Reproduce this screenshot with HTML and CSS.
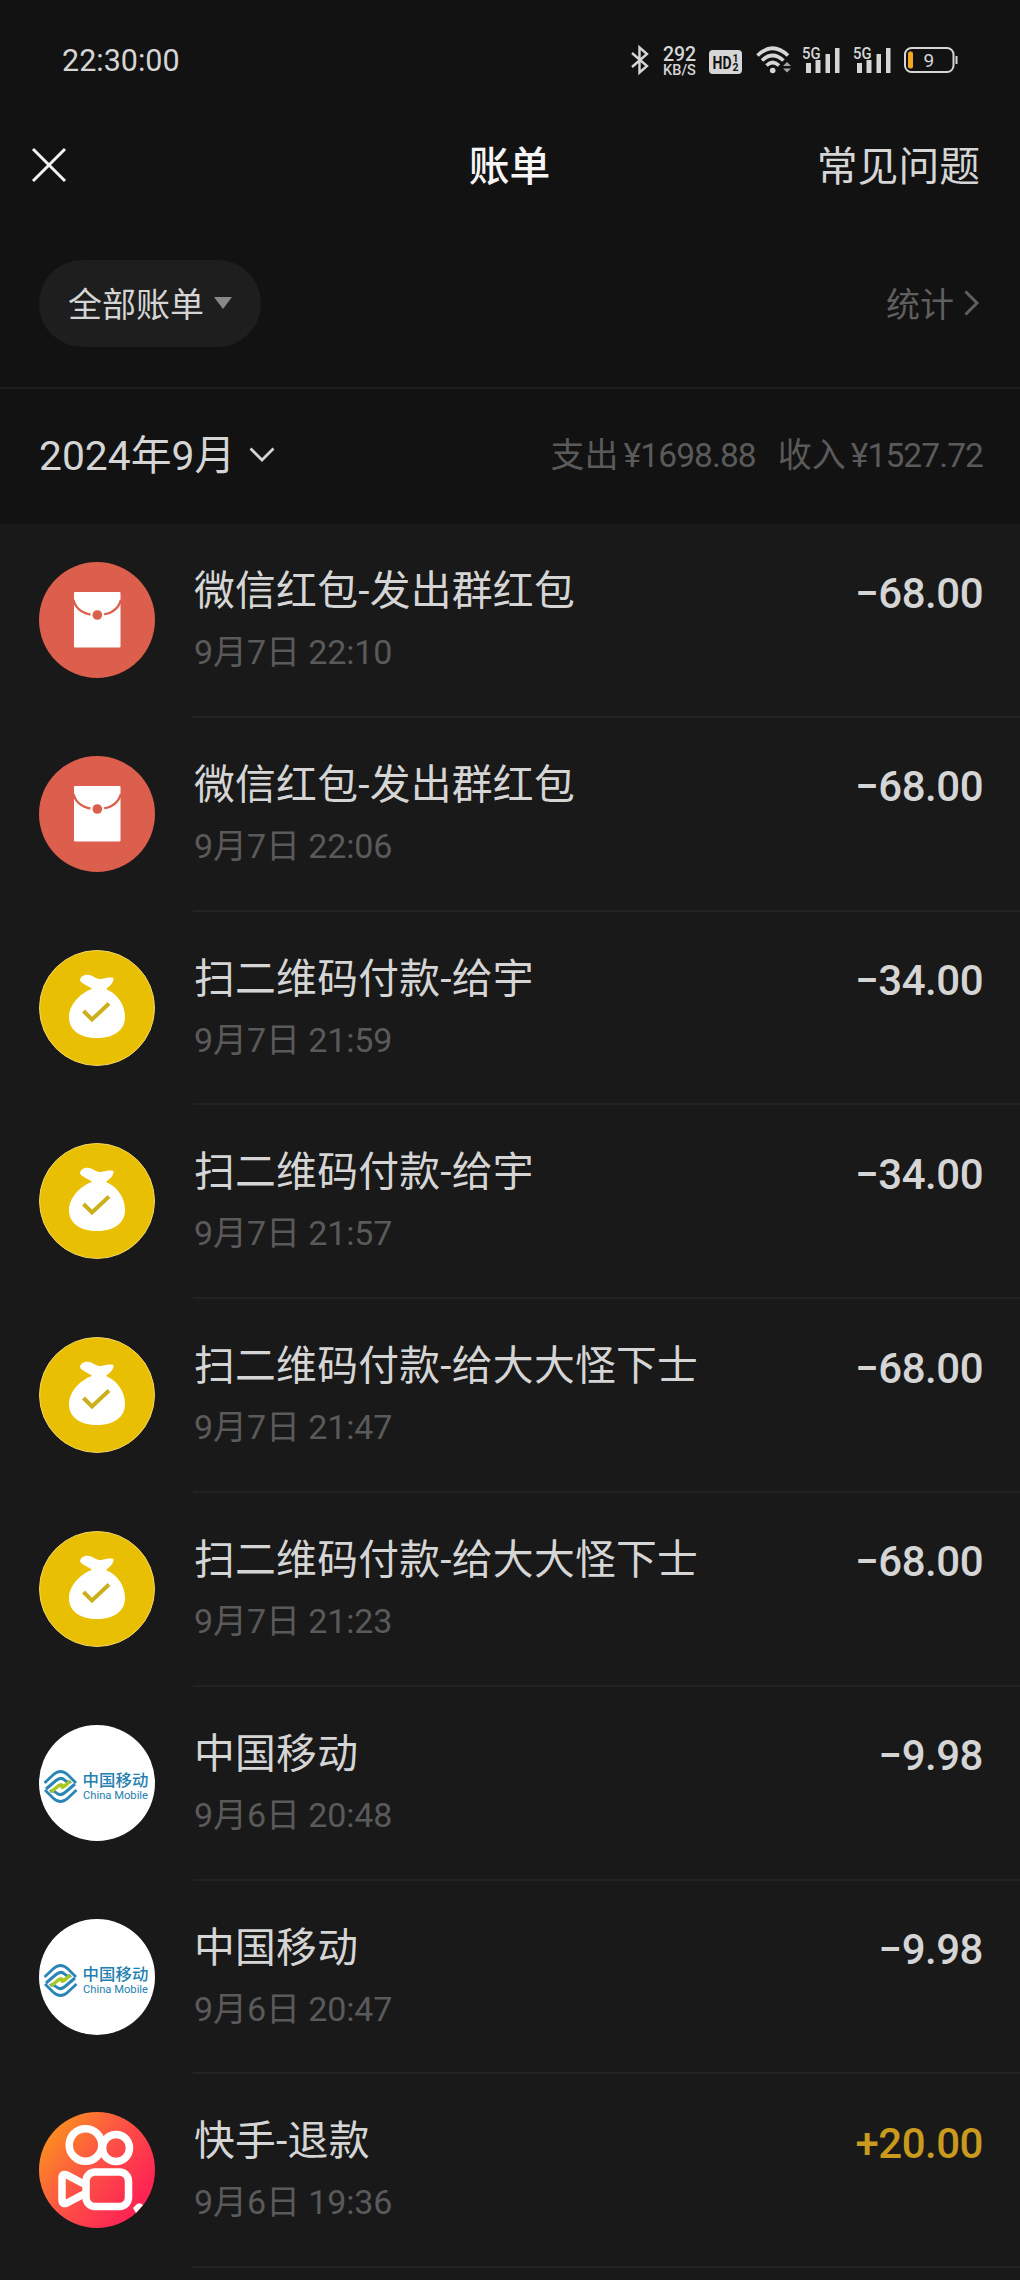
FILE: index.html
```
<!DOCTYPE html>
<html lang="zh-CN">
<head>
    <meta charset="UTF-8">
    <meta name="viewport" content="width=device-width, initial-scale=1.0">
    <title>账单</title>
    <link rel="stylesheet" href="styles.css">
</head>
<body>
    <!-- 图标 -->
    <svg class="sprite" width="0" height="0">
        <symbol id="packet" viewBox="0 0 116 116">
            <circle cx="58" cy="58" r="58" fill="#dc5e4c"/>
            <rect x="35" y="30" width="46.5" height="55.5" rx="1" fill="#fff"/>
            <path d="M34.5 38C37 48 46 53 58 53S79 48 82 38" fill="none" stroke="#dc5e4c" stroke-width="2.4"/>
            <circle cx="58.3" cy="53" r="7" fill="#fff"/>
            <circle cx="58.3" cy="53" r="4.8" fill="#dc5e4c"/>
        </symbol>
        <symbol id="bag" viewBox="0 0 116 116">
            <circle cx="58" cy="58" r="57.5" fill="#e9bf03" stroke="#f0d565"/>
            <path d="M53 39C51 36 42 34 41 30C42 25 48 24 52 25.5C56 27 57 29 62 29C67 28 71 27 74.5 28C75 32 71 36 67 39C79 44 86 55 86 67C86 81 74 88 58 88C42 88 30 81 30 67C30 55 41 43 53 39Z" fill="#fff"/>
            <path d="M44.5 61L53 69.5L70 53.5" fill="none" stroke="#cbb01c" stroke-width="4"/>
        </symbol>
        <symbol id="mobile" viewBox="0 0 116 116">
            <circle cx="58" cy="58" r="58" fill="#fff"/>
            <g id="wave" fill="none" stroke="#2a86b5">
                <path d="M5.5 58L14 50Q21.5 43 29 50L37 58" stroke-width="2.8"/>
                <path d="M7 64L17 55.500Q22 51.500 25.500 55T32 56.500" stroke-width="3"/>
            </g>
            <use href="#wave" transform="rotate(180 21.5 61.5)"/>
            <path d="M12 67L20 60.500Q23.500 58.500 23 61.500T31 56" fill="none" stroke="#a9c81f" stroke-width="3.4"/>
            <text x="43.5" y="61" font-size="16.4" textLength="66" class="logo-cn">中国移动</text>
            <text x="44" y="74" font-size="11.4" textLength="65" lengthAdjust="spacingAndGlyphs" class="logo-en">China Mobile</text>
        </symbol>
        <symbol id="kuaishou" viewBox="0 0 116 116">
            <linearGradient id="ks" x1="0.05" y1="0.2" x2="0.85" y2="0.8">
                <stop offset="0" stop-color="#fb8f20"/>
                <stop offset="0.5" stop-color="#fd5146"/>
                <stop offset="1" stop-color="#fe2453"/>
            </linearGradient>
            <circle cx="58" cy="58" r="58" fill="url(#ks)"/>
            <g fill="none" stroke="#fff" stroke-width="7.5">
                <circle cx="46.5" cy="33" r="16.3"/>
                <circle cx="77" cy="36" r="13.5"/>
                <rect x="47" y="60" width="42.5" height="34.5" rx="9"/>
                <path d="M45 72L28 63Q23 61 23 66V88Q23 93 28 91L45 82" stroke-linejoin="round"/>
            </g>
            <path d="M94 96L98 92Q101 90 104 93L97 101Z" fill="#fff"/>
        </symbol>
    </svg>

    <!-- 状态栏 -->
    <div class="status-bar">
        <span class="time">22:30:00</span>
        <div class="status-icons">
            <svg class="bluetooth" width="18" height="28" viewBox="0 0 18 28"><path d="M1 7L16 20L8.5 26.5V1.5L16 8L1 21" fill="none" stroke="#d6d6d6" stroke-width="2.4"/></svg>
            <div class="speed"><b>292</b><span>KB/S</span></div>
            <svg class="hd" width="33" height="24" viewBox="0 0 33 24">
                <rect width="33" height="24" rx="4" fill="#d6d6d6"/>
                <text x="3.5" y="18.5" font-size="18.5" textLength="19" lengthAdjust="spacingAndGlyphs">HD</text>
                <text x="23.5" y="11.5" font-size="10.5">1</text>
                <text x="23.5" y="20.5" font-size="10.5">2</text>
            </svg>
            <svg class="wifi" width="36" height="28" viewBox="0 0 36 28">
                <g fill="none" stroke="#d6d6d6" stroke-width="3.6">
                    <path d="M1.5 9.5Q16.5 -5 32 9.5"/>
                    <path d="M6 14.5Q16.5 4.5 27.5 14.5"/>
                    <path d="M10.5 19.5Q16.5 13.5 23 19.5"/>
                </g>
                <circle cx="16.7" cy="24.5" r="2.8" fill="#d6d6d6"/>
                <path d="M27 20L31 16L35 20ZM27 22.5L31 26.5L35 22.5Z" fill="#a5a5a5"/>
            </svg>
            <svg class="signal" width="38" height="28" viewBox="0 0 38 28">
                <text x="0" y="12.5" font-size="17" textLength="18.5" lengthAdjust="spacingAndGlyphs">5G</text>
                <path d="M4 17H9V27H4ZM13.5 14H18.5V27H13.5ZM23.5 8H28V27H23.5ZM33 2H37.5V27H33Z"/>
            </svg>
            <svg class="signal" width="38" height="28" viewBox="0 0 38 28">
                <text x="0" y="12.5" font-size="17" textLength="18.5" lengthAdjust="spacingAndGlyphs">5G</text>
                <path d="M4 17H9V27H4ZM13.5 14H18.5V27H13.5ZM23.5 8H28V27H23.5ZM33 2H37.5V27H33Z"/>
            </svg>
            <svg class="battery" width="54" height="26" viewBox="0 0 54 26">
                <rect x="1" y="1" width="48.5" height="24" rx="6.5" fill="none" stroke="#d6d6d6" stroke-width="2"/>
                <rect x="4" y="4.5" width="5" height="17" rx="2" fill="#f5a623"/>
                <path d="M52.5 9V17" stroke="#d6d6d6" stroke-width="2"/>
                <text x="19.5" y="19.5" font-size="19">9</text>
            </svg>
        </div>
    </div>

    <!-- 标题栏 -->
    <div class="header">
        <svg class="close" width="34" height="34" viewBox="0 0 34 34"><path d="M1 1L33 33M33 1L1 33" stroke="#f2f2f2" stroke-width="3" fill="none"/></svg>
        <h1>账单</h1>
        <a class="faq">常见问题</a>
    </div>

    <div class="filter">
        <button class="filter-button">全部账单<span class="caret"></span></button>
        <a class="stats">统计<svg width="15" height="26" viewBox="0 0 15 26"><path d="M1.5 1.5L13 13L1.5 24.5" fill="none" stroke="#5f5f5f" stroke-width="3"/></svg></a>
    </div>

    <div class="month">
        <div class="month-name">2024年9月<svg width="26" height="16" viewBox="0 0 26 16"><path d="M1.5 1.5L13 13L24.5 1.5" fill="none" stroke="#d5d5d5" stroke-width="2.8"/></svg></div>
        <div class="totals"><span>支出<i>¥1698.88</i></span><span>收入<i>¥1527.72</i></span></div>
    </div>

    <!-- 账单列表 -->
    <div class="bill-list">
        <div class="bill">
            <svg class="avatar"><use href="#packet"/></svg>
            <div class="bill-body">
                <div class="bill-info"><p class="name">微信红包-发出群红包</p><p class="date">9月7日 22:10</p></div>
                <span class="amount">−68.00</span>
            </div>
        </div>
        <div class="bill">
            <svg class="avatar"><use href="#packet"/></svg>
            <div class="bill-body">
                <div class="bill-info"><p class="name">微信红包-发出群红包</p><p class="date">9月7日 22:06</p></div>
                <span class="amount">−68.00</span>
            </div>
        </div>
        <div class="bill">
            <svg class="avatar"><use href="#bag"/></svg>
            <div class="bill-body">
                <div class="bill-info"><p class="name">扫二维码付款-给宇</p><p class="date">9月7日 21:59</p></div>
                <span class="amount">−34.00</span>
            </div>
        </div>
        <div class="bill">
            <svg class="avatar"><use href="#bag"/></svg>
            <div class="bill-body">
                <div class="bill-info"><p class="name">扫二维码付款-给宇</p><p class="date">9月7日 21:57</p></div>
                <span class="amount">−34.00</span>
            </div>
        </div>
        <div class="bill">
            <svg class="avatar"><use href="#bag"/></svg>
            <div class="bill-body">
                <div class="bill-info"><p class="name">扫二维码付款-给大大怪下士</p><p class="date">9月7日 21:47</p></div>
                <span class="amount">−68.00</span>
            </div>
        </div>
        <div class="bill">
            <svg class="avatar"><use href="#bag"/></svg>
            <div class="bill-body">
                <div class="bill-info"><p class="name">扫二维码付款-给大大怪下士</p><p class="date">9月7日 21:23</p></div>
                <span class="amount">−68.00</span>
            </div>
        </div>
        <div class="bill">
            <svg class="avatar"><use href="#mobile"/></svg>
            <div class="bill-body">
                <div class="bill-info"><p class="name">中国移动</p><p class="date">9月6日 20:48</p></div>
                <span class="amount">−9.98</span>
            </div>
        </div>
        <div class="bill">
            <svg class="avatar"><use href="#mobile"/></svg>
            <div class="bill-body">
                <div class="bill-info"><p class="name">中国移动</p><p class="date">9月6日 20:47</p></div>
                <span class="amount">−9.98</span>
            </div>
        </div>
        <div class="bill">
            <svg class="avatar"><use href="#kuaishou"/></svg>
            <div class="bill-body">
                <div class="bill-info"><p class="name">快手-退款</p><p class="date">9月6日 19:36</p></div>
                <span class="amount income">+20.00</span>
            </div>
        </div>
    </div>
</body>
</html>
```
FILE: styles.css
```
* {
    box-sizing: border-box;
    margin: 0;
    padding: 0;
}

body {
    width: 1020px;
    height: 2280px;
    overflow: hidden;
    display: flex;
    flex-direction: column;
    background: #121212;
    color: #d5d5d5;
    font-family: Roboto, "Noto Sans CJK SC", sans-serif;
}

svg {
    display: block;
    flex: none;
    overflow: visible;
}

.sprite {
    position: absolute;
}

/* 状态栏 */
.status-bar {
    height: 121px;
    padding: 0 62px;
    display: flex;
    justify-content: space-between;
}

.time {
    padding-top: 43px;
    font-size: 30.5px;
    line-height: 36px;
}

.status-icons {
    padding-top: 46px;
    display: flex;
    align-items: flex-start;
}

.status-icons text {
    fill: #d6d6d6;
    font-weight: 500;
}

.bluetooth {
    margin-right: 13px;
}

.speed {
    width: 35px;
    margin-right: 12px;
    text-align: center;
}

.speed b,
.speed span {
    display: block;
    font-size: 19.5px;
    line-height: 18px;
    font-weight: 500;
}

.speed span {
    font-size: 14.5px;
    line-height: 14px;
}

.hd {
    margin: 4px 14px 0 0;
}

.status-icons .hd text {
    fill: #121212;
    font-weight: 700;
}

.wifi {
    margin-right: 10px;
}

.signal {
    margin-right: 13px;
    fill: #d6d6d6;
}

.battery {
    margin-top: 1px;
}

.status-icons .battery text {
    font-weight: 400;
}

/* 标题栏 */
.header {
    height: 90px;
    padding: 0 40px 5px 32px;
    display: grid;
    grid-template-columns: 1fr auto 1fr;
    align-items: center;
}

.header h1 {
    padding-left: 7px;
    color: #f5f5f5;
    font-size: 40.8px;
    font-weight: 500;
}

.close {
    margin-top: 2px;
}

.faq {
    justify-self: end;
    font-size: 40.8px;
}

.filter {
    height: 178px;
    padding: 9px 41px 0 39px;
    display: flex;
    align-items: center;
    justify-content: space-between;
    border-bottom: 2px solid #1c1c1c;
}

.filter-button {
    width: 222px;
    height: 87px;
    padding: 0 0 2px 29px;
    display: flex;
    align-items: center;
    border: none;
    border-radius: 44px;
    background: #1e1e1e;
    color: #d5d5d5;
    font: 34px Roboto, "Noto Sans CJK SC", sans-serif;
}

.caret {
    margin-left: 10px;
    border: 9px solid transparent;
    border-top: 12px solid #888;
    border-bottom: none;
}

.stats {
    padding-bottom: 2px;
    display: flex;
    align-items: center;
    gap: 10px;
    color: #5f5f5f;
    font-size: 34px;
}

.month {
    height: 135px;
    padding: 0 37px 9px 39px;
    display: flex;
    align-items: center;
    justify-content: space-between;
}

.month-name {
    display: flex;
    align-items: center;
    gap: 14px;
    font-size: 40.8px;
}

.month-name svg {
    margin-top: 6px;
}

.totals {
    display: flex;
    gap: 22px;
    color: #5a5a5a;
    font-size: 34px;
}

.totals i {
    margin-left: 5px;
    font-size: 33.5px;
    font-style: normal;
    letter-spacing: -0.9px;
}

/* 账单列表 */
.bill-list {
    flex: 1;
    background: #191919;
}

.bill {
    height: 193.8px;
    padding-left: 39px;
    display: flex;
}

.avatar {
    width: 116px;
    height: 116px;
    margin: 38px 38px 0 0;
}

.logo-cn,
.logo-en {
    fill: #2380b0;
}

.logo-cn {
    font-weight: 500;
}

.bill-body {
    flex: 1;
    padding-right: 37px;
    display: flex;
    justify-content: space-between;
    border-bottom: 2px solid #222;
}

.bill-info {
    padding-left: 1px;
}

.name {
    padding-top: 37px;
    font-size: 40.8px;
    line-height: 60px;
    letter-spacing: 0.25px;
}

.date {
    padding-top: 6px;
    color: #5a5a5a;
    font-size: 34px;
    line-height: 50px;
    letter-spacing: -0.1px;
}

.amount {
    padding-top: 39.5px;
    font-size: 42px;
    font-weight: 500;
    line-height: 60px;
    letter-spacing: -0.5px;
}

.income {
    color: #c99a1e;
}
```
